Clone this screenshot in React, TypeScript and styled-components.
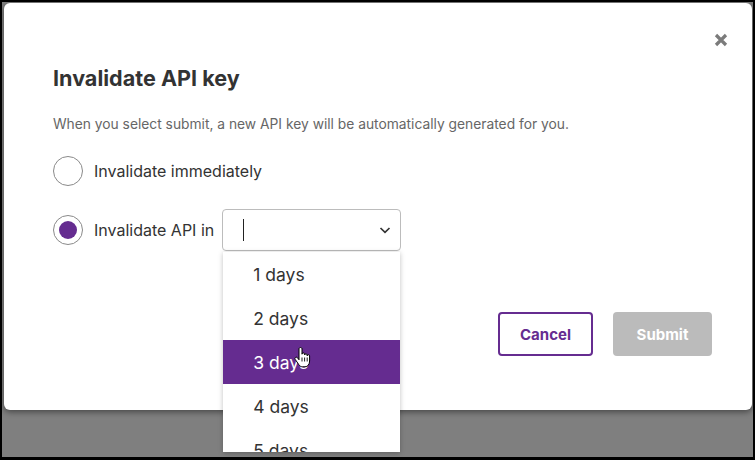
import styled, { createGlobalStyle } from 'styled-components';

const purple = '#652c90';

const GlobalStyle = createGlobalStyle`
    html, body {
        margin: 0;
        padding: 0;
        background: #000;
    }
    * {
        box-sizing: border-box;
    }
`;

const days = ['1 days', '2 days', '3 days', '4 days', '5 days'];

export default function App() {
    return (
        <>
            <GlobalStyle/>
            <Frame>
                <Overlay>
                    <Modal>
                        <CloseButton aria-label="Close">
                            <svg width="14" height="14" viewBox="0 0 14 14">
                                <path d="M2 2 L12 12 M12 2 L2 12" stroke="#7b7b7b" strokeWidth="3.2"/>
                            </svg>
                        </CloseButton>
                        <Title>Invalidate API key</Title>
                        <Description>
                            When you select submit, a new API key will be automatically generated for you.
                        </Description>
                        <Options>
                            <RadioRow>
                                <Radio/>
                                <Label>Invalidate immediately</Label>
                            </RadioRow>
                            <RadioRow>
                                <Radio $checked/>
                                <Label>Invalidate API in</Label>
                                <SelectWrap>
                                    <SelectBox>
                                        <Caret/>
                                        <svg width="14" height="14" viewBox="0 0 14 14">
                                            <path d="M2.5 5 L7 9.3 L11.5 5" fill="none" stroke="#333" strokeWidth="1.7"/>
                                        </svg>
                                    </SelectBox>
                                    <Menu>
                                        {days.map((d) => (
                                            <Option key={d} $active={d === '3 days'}>
                                                {d}
                                                {d === '3 days' && (
                                                    <Pointer width="17" height="21" viewBox="0 0 17 21">
                                                        <path
                                                            d="M5 2 C5 1.1 5.6 0.5 6.5 0.5 C7.4 0.5 8 1.1 8 2 L8 7.2 C8 6.4 8.6 5.9 9.3 5.9 C10 5.9 10.6 6.4 10.6 7.2 L10.6 8 C10.6 7.3 11.2 6.8 11.9 6.8 C12.6 6.8 13.2 7.3 13.2 8 L13.2 8.8 C13.2 8.1 13.8 7.7 14.4 7.7 C15.1 7.7 15.6 8.2 15.6 8.9 L15.6 14 C15.6 17.2 13.8 19.8 11 19.8 L8.5 19.8 C6.8 19.8 5.8 19 4.8 17.6 L1.2 12.4 C0.7 11.7 0.9 10.8 1.6 10.4 C2.3 10 3.1 10.2 3.6 10.9 L5 12.8 Z"
                                                            fill="#fff"
                                                            stroke="#000"
                                                            strokeWidth="1"
                                                        />
                                                        <path d="M8 10.5 V14.5 M10.6 10.5 V14.5 M13.2 10.5 V14.5" stroke="#000" strokeWidth="0.9"/>
                                                    </Pointer>
                                                )}
                                            </Option>
                                        ))}
                                    </Menu>
                                </SelectWrap>
                            </RadioRow>
                        </Options>
                        <Footer>
                            <Button $variant="outline">Cancel</Button>
                            <Button $variant="disabled">Submit</Button>
                        </Footer>
                    </Modal>
                </Overlay>
            </Frame>
        </>
    );
}

const Frame = styled.div`
    height: 460px;
    padding: 2px 2px 3px 2px;
    font-family: Inter, "Liberation Sans", sans-serif;
`;

const Overlay = styled.div`
    height: 100%;
    background: #7f7f7f;
    padding: 1px 1px 0 2px;
`;

const Modal = styled.div`
    position: relative;
    height: 407px;
    background: #fff;
    border-radius: 6px;
    box-shadow: 0 2px 6px rgba(0, 0, 0, 0.45);
    padding: 62px 40px 0 49px;
    color: #333;
`;

const CloseButton = styled.button`
    position: absolute;
    top: 28px;
    right: 22px;
    width: 18px;
    height: 18px;
    padding: 0;
    border: none;
    background: none;
    display: flex;
    align-items: center;
    justify-content: center;
`;

const Title = styled.h2`
    margin: 0;
    font-size: 21.6px;
    line-height: 26px;
    font-weight: 700;
    color: #333;
`;

const Description = styled.p`
    margin: 24px 0 0;
    font-size: 13.8px;
    line-height: 18px;
    color: #666;
`;

const Options = styled.div`
    margin-top: 23px;
    display: flex;
    flex-direction: column;
    gap: 23px;
`;

const RadioRow = styled.div`
    display: flex;
    align-items: center;
    min-height: 30px;
`;

const Radio = styled.span<{ $checked?: boolean }>`
    width: 30px;
    height: 30px;
    border-radius: 50%;
    border: 1px solid #8a8a8a;
    display: flex;
    align-items: center;
    justify-content: center;
    flex-shrink: 0;

    &::after {
        content: '';
        width: 18px;
        height: 18px;
        border-radius: 50%;
        background: ${(p) => (p.$checked ? purple : 'transparent')};
    }
`;

const Label = styled.span`
    margin-left: 11px;
    font-size: 16px;
    color: #333;
`;

const SelectWrap = styled.div`
    position: relative;
    margin-left: 8px;
    width: 179px;
`;

const SelectBox = styled.div`
    height: 42px;
    border: 1px solid #bcbcbc;
    border-radius: 4px;
    display: flex;
    align-items: center;
    justify-content: space-between;
    padding: 0 8px 0 20px;
`;

const Caret = styled.span`
    width: 1px;
    height: 22px;
    background: #222;
`;

const Menu = styled.div`
    position: absolute;
    top: 43px;
    left: 1px;
    width: 177px;
    height: 200px;
    overflow: hidden;
    background: #fff;
    box-shadow: 0 1px 5px rgba(0, 0, 0, 0.25);
    z-index: 2;
`;

const Option = styled.div<{ $active?: boolean }>`
    position: relative;
    height: 44px;
    display: flex;
    align-items: center;
    padding-left: 30px;
    font-size: 17.5px;
    color: ${(p) => (p.$active ? '#fff' : '#333')};
    background: ${(p) => (p.$active ? purple : '#fff')};
`;

const Pointer = styled.svg`
    position: absolute;
    left: 71px;
    top: 7px;
`;

const Footer = styled.div`
    margin-top: 61px;
    display: flex;
    justify-content: flex-end;
    gap: 20px;
`;

const Button = styled.button<{ $variant: 'outline' | 'disabled' }>`
    height: 44px;
    width: ${(p) => (p.$variant === 'outline' ? '95px' : '99px')};
    border-radius: 4px;
    font-family: inherit;
    font-size: 15px;
    font-weight: 700;
    border: ${(p) => (p.$variant === 'outline' ? `2px solid ${purple}` : 'none')};
    background: ${(p) => (p.$variant === 'outline' ? '#fff' : '#bbb')};
    color: ${(p) => (p.$variant === 'outline' ? purple : '#fff')};
`;
